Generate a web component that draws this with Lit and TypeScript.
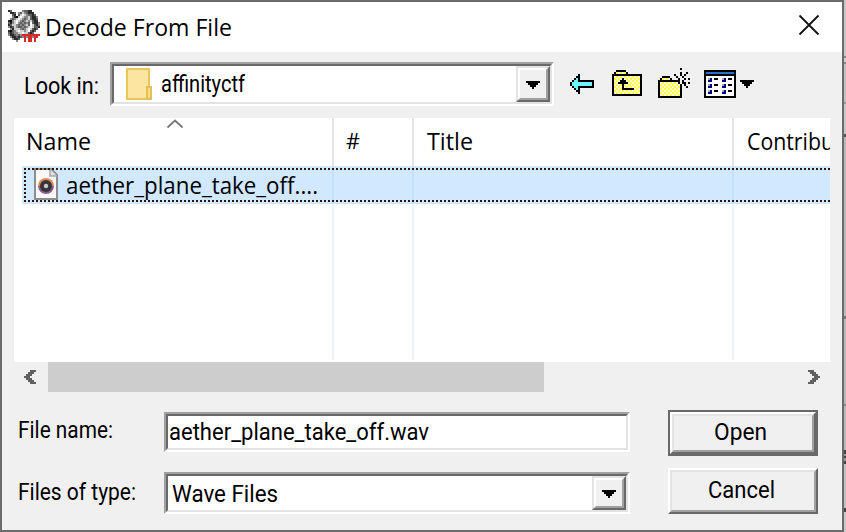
import { LitElement, html, svg, css } from "lit";
import { customElement } from "lit/decorators.js";

const UI = "Roboto, 'Liberation Sans', sans-serif";
const SEGOE = "'Open Sans', 'Noto Sans', sans-serif";

/** A line of text fitted to a width; baseline is measured from the top of its container. */
const label = (text: string, width: number, baseline: number, family = UI, size = 23) => html`
  <svg class="label" width=${width} height=${baseline + 6}>
    <text x="0" y=${baseline} font-family=${family} font-size=${size} textLength=${width}
      lengthAdjust="spacingAndGlyphs">${text}</text>
  </svg>`;

const PALETTE: Record<string, string> = {
  "#": "#000", c: "#6ff4ff", y: "#ffff3c", w: "#fff", b: "#2a72c8", n: "#000080", g: "#a8a8b0",
  k: "#606060", o: "#fff6d8", d: "#2b2b2b", m: "#8a8a8a", l: "#cfcfcf", r: "#d62a2a",
};

/** Bitmap icon, one character for each two-pixel cell. */
const bitmap = (rows: string[]) => html`
  <svg class="bitmap" width=${rows[0].length * 2} height=${rows.length * 2} shape-rendering="crispEdges">
    ${rows.flatMap((row, y) => [...row].map((ch, x) => {
      const key = ch === "f" ? ((x + y) % 2 ? "y" : "o") : ch;
      return PALETTE[key]
        ? svg`<rect x=${x * 2} y=${y * 2} width="2" height="2" fill=${PALETTE[key]}></rect>` : null;
    }))}
  </svg>`;

const APP = [
  "dk.....mkkdd....",
  ".ddk.mklmkddd...",
  "..kd.klwlmkkdk..",
  "..md#lwlmmlkddm.",
  ".mkmlwlmkmlkddk.",
  "d#mlwlmkmlmlkdd.",
  "kdmlwmkmkmkwkddm",
  "dkllmkmkmlkwlkdm",
  "mdklmkkmkmlwlkkd",
  ".mdlllmkmlwlkdk.",
  "d#kmlwllmlwkdk..",
  "kdkmmllwllkdk...",
  "mddkmkmrrrrrrrrr",
  ".mddkdkmrmrrmrr.",
  "..mddk..r.rr.r..",
  "....m...r.rr.r..",
];
const TRIANGLE = ["#######", ".#####.", "..###..", "...#..."];
const BACK = [
  "....#.......",
  "...##.......",
  "..#c#.......",
  ".#cc########",
  "#cccccccccc#",
  "#cccccccccc#",
  ".#cc########",
  "..#c#.......",
  "...##.......",
  "....#.......",
];
const UP = [
  "..#####........",
  ".#fffff#.......",
  "###############",
  "#fffffffffffff#",
  "#ffff#ffffffff#",
  "#fff###fffffff#",
  "#ff#####ffffff#",
  "#ffff#ffffffff#",
  "#ffff#ffffffff#",
  "#ffff######fff#",
  "#fffffffffffff#",
  "#fffffffffffff#",
  "###############",
];
const NEW = [
  "...........#....",
  "................",
  "...........#..#.",
  "........#..#.#..",
  "..####...#..#...",
  ".#ffff#...#..#.#",
  "###########.#...",
  "#fffffffff#.##.#",
  "#ffffffffff#.#..",
  "#ffffffffff#..#.",
  "#ffffffffff#....",
  "#ffffffffff#....",
  "#ffffffffff#....",
  "#ffffffffff#....",
  "############....",
];
const VIEW = [
  "################",
  "#bbbbbbbbbbbbbb#",
  "################",
  "#wwwwwwwwwwwwww#",
  "#wgnw##wwgnw##w#",
  "#wnnwwwwwnnwwww#",
  "#wwwwwwwwwwwwww#",
  "#wgnw##wwgnw##w#",
  "#wnnwwwwwnnwwww#",
  "#wwwwwwwwwwwwww#",
  "#wgnw##wwgnw##w#",
  "#wnnwwwwwnnwwww#",
  "#wwwwwwwwwwwwww#",
  "################",
];
const LEFT = ["...kkk", "..kkk.", ".kkk..", "kkk...", ".kkk..", "..kkk.", "...kkk"];
const RIGHT = LEFT.map((r) => [...r].reverse().join(""));

const folderIcon = html`
  <svg class="folder" width="26" height="32" viewBox="0 0 26 32">
    <rect x="1" y="1" width="22" height="30" fill="#fbe5a0" stroke="#e8c65c" stroke-width="2"></rect>
    <rect x="21" y="19" width="4" height="12" fill="#f8dc86" stroke="#e3bf55" stroke-width="2"></rect>
  </svg>`;

const fileIcon = html`
  <svg class="file" width="24" height="32" viewBox="0 0 24 32">
    <path d="M1 1H17L23 7V31H1Z" fill="#f8f8f8" stroke="#8d8d8d" stroke-width="2"></path>
    <path d="M16 1V8H23" fill="#e2e2e2" stroke="#a5a5a5" stroke-width="1.5"></path>
    <path d="M4 18A8 8 0 0 1 20 18Z" fill="#e08a55"></path>
    <path d="M4 18A8 8 0 0 0 20 18Z" fill="#8c5c8e"></path>
    <circle cx="12" cy="18" r="6" fill="#37343a"></circle>
    <circle cx="12" cy="18" r="2.2" fill="#c9c9c9"></circle>
  </svg>`;

@customElement("app-root")
export class AppRoot extends LitElement {
  static styles = css`
    :host { display: block; width: 846px; height: 532px; overflow: hidden; color: #000; }
    * { box-sizing: border-box; }
    svg { display: block; flex: none; overflow: visible; }
    .screen { display: flex; width: 846px; height: 532px; }
    .window { width: 844px; height: 532px; border: 2px solid #6b6b6b; background: #f0f0f0; display: flex; flex-direction: column; }
    .behind { width: 2px; background: linear-gradient(#c8c8c8 56px, #8a8a8a 56px 58px, #d0d0d0 58px 62px, #8a8a8a 62px 64px, #c0c0c0 64px 102px, #999 102px 104px, #c8c8c8 104px 134px, #555 134px 137px, #bbb 137px 316px, #777 316px 319px, #bbb 319px 404px, #888 404px 406px, #bbb 406px 450px, #444 450px 454px, #999 454px 456px, #444 456px 458px, #999 458px 461px, #444 461px 464px, #c0c0c0 464px 508px, #444 508px 512px, #c8c8c8 512px); }
    .title { height: 50px; background: #fff; display: flex; padding-left: 6px; flex: none; }
    .app { margin-top: 8px; }
    .title .label { margin-left: 5px; }
    .close { margin: 13px 0 0 auto; padding-right: 23px; box-sizing: content-box; }
    .look { display: flex; height: 66px; padding: 10px 0 0 22px; flex: none; }
    .look > .combo { margin-left: 11px; width: 444px; height: 44px; }
    .sunken { border: 2px solid; border-color: #a0a0a0 #fff #fff #a0a0a0; background: #fff; display: flex; }
    .well { flex: 1; min-width: 0; border: 2px solid; border-color: #696969 #e3e3e3 #e3e3e3 #696969; display: flex; }
    .drop { margin-left: auto; width: 34px; border: 2px solid; border-color: #e3e3e3 #696969 #696969 #e3e3e3; background: #f0f0f0; display: flex; }
    .dropface { flex: 1; border: 2px solid; border-color: #fff #a0a0a0 #a0a0a0 #fff; display: flex; align-items: center; justify-content: center; padding-top: 2px; }
    .folder { margin: 2px 9px 0 12px; }
    .tools { display: flex; }
    .back { margin: 12px 0 0 16px; }
    .up { margin: 8px 0 0 18px; }
    .new { margin: 6px 0 0 16px; }
    .view { margin: 8px 0 0 14px; }
    .more { margin: 18px 0 0 4px; }
    .list { margin: 0 12px; height: 244px; background: #fff; overflow: hidden; display: grid; grid-template: 48px 38px 156px / 320px 80px 320px 96px; flex: none; }
    .head { border-right: 2px solid #e5e5e5; padding-left: 12px; overflow: hidden; display: flex; }
    .head:nth-child(3) { padding-left: 13px; }
    .head:nth-child(4) { border: 0; padding-left: 13px; }
    .sort { margin: 1px 0 0 76px; }
    .row { grid-column: 1 / -1; margin-left: 8px; background: #d1e8ff; display: flex; padding-left: 12px; background-image: linear-gradient(#c2e0ff, #c2e0ff), linear-gradient(#c2e0ff, #c2e0ff), linear-gradient(#c2e0ff, #c2e0ff); background-size: 2px 38px; background-repeat: no-repeat; background-position: 310px 0, 390px 0, 710px 0; position: relative; }
    .focus { position: absolute; left: 2px; top: 2px; }
    .file { margin-top: 2px; }
    .row .label { margin-left: 8px; }
    .cell { border-right: 2px solid #eaf4ff; }
    .cell:last-child { border: 0; }
    .scroll { height: 30px; margin: 0 12px; display: flex; align-items: center; flex: none; }
    .scroll .bitmap { margin-left: 10px; }
    .thumb { width: 496px; height: 30px; background: #cdcdcd; margin-left: 12px; }
    .scroll .bitmap:last-child { margin-left: auto; margin-right: 10px; }
    .form { padding: 18px 24px 0 16px; display: grid; grid-template-columns: 146px 466px 38px 150px; grid-template-rows: 58px 46px; }
    .field { display: flex; }
    .name { height: 40px; margin-top: 2px; }
    .type { height: 42px; margin-top: 4px; }
    .name .well { padding-left: 1px; }
    .type .well { padding-left: 4px; }
    button { grid-column: 4; height: 46px; padding: 0; margin: 0; background: #f0f0f0; border: 2px solid; border-color: #fff #696969 #696969 #fff; display: flex; }
    .open { border-color: #696969; }
    .open .raised { border: 2px solid; border-color: #fff #696969 #696969 #fff; }
    .raised, .face { flex: 1; align-self: stretch; display: flex; }
    .face { border: 2px solid; border-color: #e3e3e3 #a0a0a0 #a0a0a0 #e3e3e3; justify-content: center; }
    .open .face { padding-right: 5px; }
    .cancel .face { padding-right: 3px; }
  `;

  private drop() {
    return html`<div class="drop"><div class="dropface">${bitmap(TRIANGLE)}</div></div>`;
  }

  render() {
    return html`
      <div class="screen">
        <div class="window">
          <div class="title">
            <div class="app">${bitmap(APP)}</div>${label("Decode From File", 187, 34, SEGOE, 23)}
            <svg class="close" width="20" height="20"><path d="M0.5 0.5L19.5 19.5M19.5 0.5L0.5 19.5" stroke="#111" stroke-width="1.8"></path></svg>
          </div>
          <div class="look">
            ${label("Look in:", 75, 32)}
            <div class="combo sunken"><div class="well">
              ${folderIcon}${label("affinityctf", 84, 26)}${this.drop()}
            </div></div>
            <div class="tools">
              <div class="back">${bitmap(BACK)}</div>
              <div class="up">${bitmap(UP)}</div>
              <div class="new">${bitmap(NEW)}</div>
              <div class="view">${bitmap(VIEW)}</div>
              <div class="more">${bitmap(TRIANGLE)}</div>
            </div>
          </div>
          <div class="list">
            <div class="head">${label("Name", 65, 32, SEGOE, 23)}
              <svg class="sort" width="16" height="9"><path d="M0.5 8.5L8 1.5L15.5 8.5" fill="none" stroke="#777" stroke-width="1.8"></path></svg>
            </div>
            <div class="head">${label("#", 14, 31, SEGOE, 22)}</div>
            <div class="head">${label("Title", 46, 32, SEGOE, 23)}</div>
            <div class="head">${label("Contribu", 87, 32, SEGOE, 23)}</div>
            <div class="row">
              ${fileIcon}${label("aether_plane_take_off....", 252, 28, SEGOE, 23)}
              <svg class="focus" width="806" height="34" shape-rendering="crispEdges">
                <path d="M0 1H806M0 33H806M1 4V32" fill="none" stroke="#2e1700" stroke-width="2" stroke-dasharray="2 2"></path>
              </svg>
            </div>
            <div class="cell"></div><div class="cell"></div><div class="cell"></div><div class="cell"></div>
          </div>
          <div class="scroll">${bitmap(LEFT)}<div class="thumb"></div>${bitmap(RIGHT)}</div>
          <div class="form">
            <div class="field">${label("File name:", 95, 28)}</div>
            <div class="name sunken"><div class="well">${label("aether_plane_take_off.wav", 260, 24)}</div></div>
            <button class="open"><span class="raised"><span class="face">${label("Open", 53, 24)}</span></span></button>
            <div class="field">${label("Files of type:", 118, 32)}</div>
            <div class="type sunken"><div class="well">${label("Wave Files", 106, 26)}${this.drop()}</div></div>
            <button class="cancel"><span class="face">${label("Cancel", 67, 26)}</span></button>
          </div>
        </div>
        <div class="behind"></div>
      </div>`;
  }
}
